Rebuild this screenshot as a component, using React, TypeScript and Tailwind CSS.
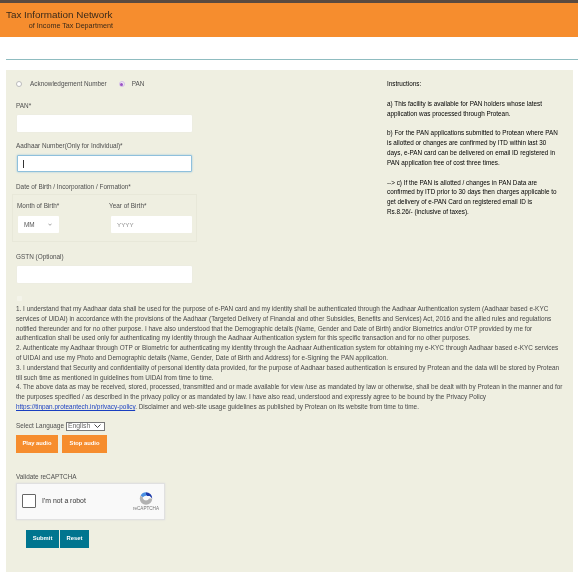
import React from "react";

const inputCls = "block h-[17px] w-[175px] bg-white rounded-[1px] shadow-[0_0_1px_#e2e2da]";

const terms = [
  "1. I understand that my Aadhaar data shall be used for the purpose of e-PAN card and my identity shall be authenticated through the Aadhaar Authentication system (Aadhaar based e-KYC",
  "services of UIDAI) in accordance with the provisions of the Aadhaar (Targeted Delivery of Financial and other Subsidies, Benefits and Services) Act, 2016 and the allied rules and regulations",
  "notified thereunder and for no other purpose. I have also understood that the Demographic details (Name, Gender and Date of Birth) and/or Biometrics and/or OTP provided by me for",
  "authentication shall be used only for authenticating my identity through the Aadhaar Authentication system for this specific transaction and for no other purposes.",
  "2. Authenticate my Aadhaar through OTP or Biometric for authenticating my identity through the Aadhaar Authentication system for obtaining my e-KYC through Aadhaar based e-KYC services",
  "of UIDAI and use my Photo and Demographic details (Name, Gender, Date of Birth and Address) for e-Signing the PAN application.",
  "3. I understand that Security and confidentiality of personal identity data provided, for the purpose of Aadhaar based authentication is ensured by Protean and the data will be stored by Protean",
  "till such time as mentioned in guidelines from UIDAI from time to time.",
  "4. The above data as may be received, stored, processed, transmitted and or made available for view /use as mandated by law or otherwise, shall be dealt with by Protean in the manner and for",
  "the purposes specified / as described in the privacy policy or as mandated by law. I have also read, understood and expressly agree to be bound by the Privacy Policy",
];

function Label({ children, className = "" }: { children: React.ReactNode; className?: string }) {
  return <div className={"text-[6.4px] leading-[10px] text-[#4f4f4f] whitespace-nowrap " + className}>{children}</div>;
}

export default function App() {
  return (
    <div className="w-[578px] h-[574px] overflow-hidden bg-white font-['Liberation_Sans',Arial,sans-serif] blur-[0.3px]">
      <div className="h-[3px] bg-[#5a4a40]" />
      <header className="h-[34px] bg-[#f68d2e] pl-[6px] pt-[7px] w-full">
        <div className="w-[107px] text-[#3a2a1a]">
          <div className="text-[9.9px] leading-[10px] whitespace-nowrap">Tax Information Network</div>
          <div className="text-[7.2px] leading-[9px] mt-[1px] text-right whitespace-nowrap">of Income Tax Department</div>
        </div>
      </header>
      <div className="h-[22px]" />
      <div className="ml-[6px] h-px bg-[#8fbcc0]" />
      <main className="mt-[10px] ml-[6px] mr-[5px] h-[502px] bg-[#efefe1]">
        <div className="flex h-[226px]">
          <div className="w-[381px] pl-[10px] pt-[9px]">
            <div className="flex items-center h-[10px]">
              <span className="w-[6px] h-[6px] rounded-full bg-white border border-[#bbb]" />
              <span className="ml-[8px] text-[6.4px] text-[#4f4f4f]">Acknowledgement Number</span>
              <span className="ml-[12px] w-[6px] h-[6px] rounded-full border border-[#d5bfe6] bg-[#f0e8f4] flex items-center justify-center">
                <span className="w-[3px] h-[3px] rounded-full bg-[#9a52c4]" />
              </span>
              <span className="ml-[7px] text-[6.4px] text-[#4f4f4f]">PAN</span>
            </div>
            <Label className="mt-[12px]">PAN*</Label>
            <div className={inputCls + " mt-[4px] ml-[1px]"} />
            <Label className="mt-[9px]">Aadhaar Number(Only for Individual)*</Label>
            <div className="mt-[4px] ml-[1px] h-[17px] w-[175px] bg-white rounded-[1px] border border-[#8fc0dc] shadow-[0_0_2px_#8fc0dc] flex items-center pl-[5px]">
              <span className="w-px h-[8px] bg-[#333]" />
            </div>
            <Label className="mt-[10px]">Date of Birth / Incorporation / Formation*</Label>
            <div className="mt-[2px] -ml-[4px] w-[185px] h-[48px] border border-[#e8e8d9] pl-[4px] pt-[6px] flex">
              <div className="w-[92px]">
                <Label>Month of Birth*</Label>
                <div className="mt-[5px] ml-[1px] w-[41px] h-[17px] bg-white rounded-[1px] flex items-center justify-between pl-[6px] pr-[7px] text-[6.4px] text-[#555]">
                  <span>MM</span>
                  <svg width="4" height="3" viewBox="0 0 4 3"><path d="M0.5 1 L2 2.2 L3.5 1" fill="none" stroke="#777" strokeWidth="0.7" /></svg>
                </div>
              </div>
              <div>
                <Label>Year of Birth*</Label>
                <div className="mt-[5px] ml-[2px] w-[81px] h-[17px] bg-white rounded-[1px] flex items-center pl-[6px] text-[6.2px] text-[#888]">
                  YYYY
                </div>
              </div>
            </div>
            <Label className="mt-[10px]">GSTN (Optional)</Label>
            <div className={inputCls + " mt-[4px] ml-[1px]"} />
          </div>
          <div className="pt-[9px] text-[6.35px] leading-[9.8px] text-black whitespace-nowrap">
            <div>Instructions:</div>
            <div className="mt-[10px]">a) This facility is available for PAN holders whose latest</div>
            <div>application was processed through Protean.</div>
            <div className="mt-[10px]">b) For the PAN applications submitted to Protean where PAN</div>
            <div>is allotted or changes are confirmed by ITD within last 30</div>
            <div>days, e-PAN card can be delivered on email ID registered in</div>
            <div>PAN application free of cost three times.</div>
            <div className="mt-[10px]">--&gt; c) If the PAN is allotted / changes in PAN Data are</div>
            <div>confirmed by ITD prior to 30 days then charges applicable to</div>
            <div>get delivery of e-PAN Card on registered email ID is</div>
            <div>Rs.8.26/- (inclusive of taxes).</div>
          </div>
        </div>
        <div className="pl-[10px]">
          <div className="h-[5px] w-[5px] ml-[1px] bg-[#f4f4ea] rounded-[1px]" />
          <div className="mt-[3px] text-[6.42px] leading-[9.8px] text-[#484848] whitespace-nowrap">
            {terms.map((t) => (
              <div key={t}>{t}</div>
            ))}
            <div>
              <a className="text-[#1a3fc0] underline" href="#">https://tinpan.proteantech.in/privacy-policy</a>
              . Disclaimer and web-site usage guidelines as published by Protean on its website from time to time.
            </div>
          </div>
          <div className="mt-[10px] flex items-center h-[9px]">
            <span className="text-[6.4px] text-[#4f4f4f]">Select Language</span>
            <span className="ml-[2px] w-[39px] h-[9px] bg-white border border-[#777] flex items-center justify-between pl-[1px] pr-[3px] text-[6.8px] text-[#666]">
              English
              <svg width="7" height="4" viewBox="0 0 7 4"><path d="M0.5 0.5 L3.5 3.5 L6.5 0.5" fill="none" stroke="#333" strokeWidth="0.9" /></svg>
            </span>
          </div>
          <div className="mt-[4px] flex gap-[4px]">
            <button className="w-[42px] h-[18px] bg-[#f68d2e] text-white text-[5.8px] font-bold">Play audio</button>
            <button className="w-[45px] h-[18px] bg-[#f68d2e] text-white text-[5.8px] font-bold">Stop audio</button>
          </div>
          <Label className="mt-[19px]">Validate reCAPTCHA</Label>
          <div className="mt-[1px] w-[149px] h-[37px] bg-[#f9f9f9] border border-[#e0e0e0] flex items-center pl-[5px] shadow-[0_0_2px_#ddd]">
            <span className="w-[14px] h-[14px] bg-white border border-[#666] rounded-[1px]" />
            <span className="ml-[6px] text-[6.9px] text-[#333]">I'm not a robot</span>
            <div className="ml-auto mr-[5px] flex flex-col items-center">
              <svg width="16" height="15" viewBox="0 0 24 24">
                <path d="M12 2 A10 10 0 0 1 22 12 L18 8 L14 8 A6 6 0 0 0 12 6 Z" fill="#1c3aa9" />
                <path d="M12 2 A10 10 0 0 0 3.5 7 L7 10 A6 6 0 0 1 14 8 L12 6 Z" fill="#4a90e2" />
                <path d="M2 12 A10 10 0 0 0 22 12 L17 12 A5.5 5.5 0 0 1 7 12 L7 10 L3 7 Z" fill="#b2b2b2" />
              </svg>
              <span className="text-[4.6px] leading-[6px] text-[#777]">reCAPTCHA</span>
            </div>
          </div>
          <div className="mt-[10px] ml-[10px] flex gap-[1px]">
            <button className="w-[33px] h-[18px] bg-[#00758f] text-white text-[5.8px] font-bold">Submit</button>
            <button className="w-[29px] h-[18px] bg-[#00758f] text-white text-[5.8px] font-bold">Reset</button>
          </div>
        </div>
      </main>
    </div>
  );
}
